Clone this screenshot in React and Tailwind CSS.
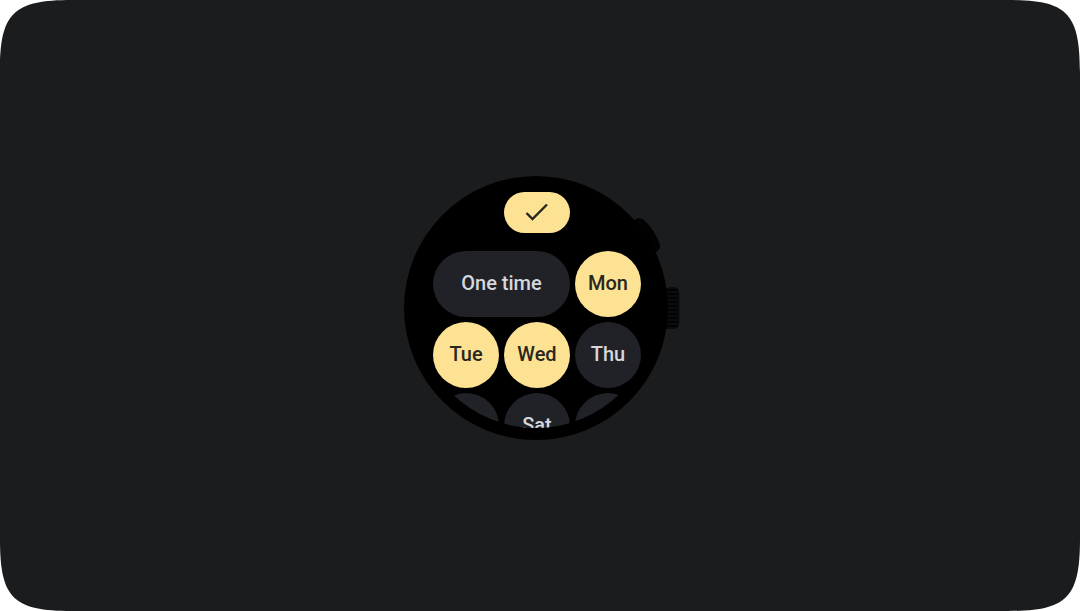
import { useState } from 'react';
import clsx from 'clsx';

const OPTIONS = [
    { key: 'once', label: 'One time', wide: true },
    { key: 'mon', label: 'Mon' },
    { key: 'tue', label: 'Tue' },
    { key: 'wed', label: 'Wed' },
    { key: 'thu', label: 'Thu' },
    { key: 'fri', name: 'Friday' },
    { key: 'sat', label: 'Sat' },
    { key: 'sun', name: 'Sunday' },
];

const CORNERS = [
    'top-0 left-0',
    'top-0 right-0 rotate-90',
    'bottom-0 right-0 rotate-180',
    'bottom-0 left-0 -rotate-90',
];

const RIDGES = [290, 294, 298, 302, 306, 310, 314, 318, 322, 326];

function WatchButtons() {
    return (
        <svg className="absolute inset-0" width="276" height="264" viewBox="404 176 276 264" aria-hidden="true">
            <path d="M630 222 L636 219 Q640 217 644 220 Q655 230 660 245 Q661 248 658 250 L652 258 Z" fill="#020202" />
            <path d="M664 288 H668 Q669 287 671 287 H675 Q679 288 679.500 294 V322 Q679 328 675 329 H664 Z" fill="#0b0c0d" />
            {RIDGES.map((y) => (
                <path key={y} d={`M666 ${y} H678`} stroke="#030303" strokeWidth="2" />
            ))}
        </svg>
    );
}

function DayChip({ option, selected, onToggle }) {
    return (
        <button
            type="button"
            aria-pressed={selected}
            aria-label={option.name}
            onClick={() => onToggle(option.key)}
            className={clsx(
                'h-[66px] rounded-full pb-0.5 text-center text-xl font-medium whitespace-nowrap',
                option.wide && 'col-span-2',
                selected ? 'bg-[#fde293] text-[#2a2720]' : 'bg-[#202227] text-[#d6d7dd]',
            )}
        >
            {option.label}
        </button>
    );
}

export default function App() {
    const [selected, setSelected] = useState(['mon', 'tue', 'wed']);

    const toggle = (key) => {
        setSelected((prev) => (prev.includes(key) ? prev.filter((k) => k !== key) : [...prev, key]));
    };

    return (
        <main className="relative flex min-h-screen items-center justify-center overflow-hidden bg-[#1b1c1e] pt-[5px] pl-1 font-['Roboto',sans-serif]">
            {CORNERS.map((position) => (
                <svg key={position} className={clsx('absolute', position)} width="72" height="72" viewBox="0 0 72 72" aria-hidden="true">
                    <path d="M0 0 H72 C13 0 0 13 0 72 Z" fill="#fff" />
                </svg>
            ))}

            <div className="relative w-[276px]">
                <WatchButtons />
                <div className="relative size-[264px] rounded-full bg-black p-3">
                    <div className="size-[240px] overflow-hidden rounded-full pt-1 pl-[17px]">
                        <div className="grid w-[208px] grid-cols-3 gap-[5px]">
                            <button
                                type="button"
                                aria-label="Confirm"
                                className="col-start-2 mb-[13px] flex h-[41px] items-center justify-center rounded-full bg-[#fde293] text-[#2a2720]"
                            >
                                <svg width="26" height="26" viewBox="0 0 26 26" fill="none" stroke="currentColor" strokeWidth="2.400" aria-hidden="true">
                                    <path d="M2.500 13 L8.500 19 L23 4.500" />
                                </svg>
                            </button>
                            <div className="col-span-3 grid grid-cols-3 gap-[5px]">
                                {OPTIONS.map((option) => (
                                    <DayChip
                                        key={option.key}
                                        option={option}
                                        selected={selected.includes(option.key)}
                                        onToggle={toggle}
                                    />
                                ))}
                            </div>
                        </div>
                    </div>
                </div>
            </div>
        </main>
    );
}
